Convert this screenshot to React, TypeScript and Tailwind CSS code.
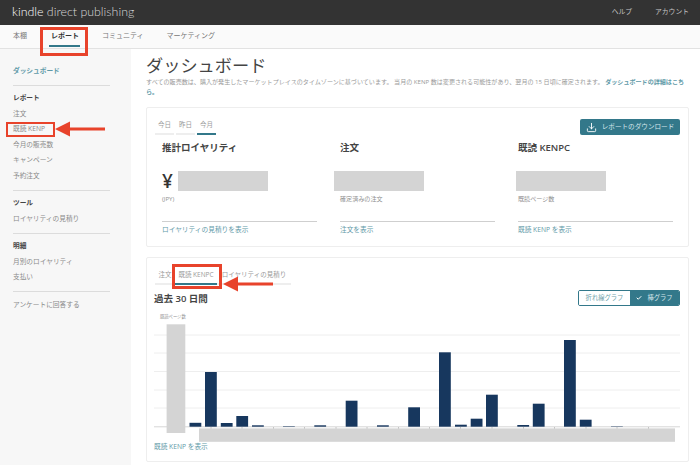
import { Download, Check } from 'lucide-react';

const gridLines = [335, 353, 371.5, 390, 408];
const ticks = [211, 242, 273.5, 304.5, 336, 367, 398.5, 429.5, 460.5, 492, 523.5, 554.5, 586, 617, 648.5];
const bars = [
    [189.5, 422.8], [205, 372], [220.8, 423], [236.3, 416], [252, 425.3], [283, 426.2],
    [314.3, 425.3], [345.7, 400.7], [377, 425.3], [408.2, 407.3], [439, 352.3], [455, 424.7],
    [470.7, 418.7], [486, 394.7], [517.3, 425], [532.8, 403.7], [564, 340], [579.8, 419.7], [611, 426.3],
];

function Divider() {
    return <div className="mt-[6px] mb-[5px] h-px w-[97px] bg-[#dcdcdc]" />;
}

function SideItem({ label, bold }: { label: string; bold?: boolean }) {
    return (
        <div className={`flex h-[15.5px] items-center text-[6.7px] ${bold ? 'font-bold text-[#444]' : 'text-[#8a8a8a]'}`}>
            {label}
        </div>
    );
}

function Tab({ label, active, width }: { label: string; active?: boolean; width: string }) {
    return (
        <div className={`flex flex-col items-center ${width}`}>
            <span className="flex h-[11px] items-center text-[6.5px] whitespace-nowrap text-[#9a9a9a]">{label}</span>
            <div className={`mt-[3px] h-[2px] w-full ${active ? 'bg-[#33788a]' : 'bg-[#eeeeee]'}`} />
        </div>
    );
}

function Stat({ title, note, link, yen, shift }: { title: string; note: string; link: string; yen?: boolean; shift: string }) {
    return (
        <div>
            <h3 className="text-[9.5px] leading-[14px] font-semibold text-[#444]">{title}</h3>
            <div className={`mt-[16px] flex h-[20px] items-center ${shift}`}>
                {yen && <span className="w-[16px] text-[19px] leading-none font-semibold text-[#333]">¥</span>}
                <div className="h-[20px] w-[90px] bg-[#d4d4d4]" />
            </div>
            <p className="mt-[4px] h-[8px] text-[6.1px] leading-[8px] text-[#8f8f8f]">{note}</p>
            <div className="mt-[18px] h-px bg-[#cfcfcf]" />
            <a className="mt-[3px] block text-[6.7px] leading-[9px] text-[#5f9aa8]">{link}</a>
        </div>
    );
}

function Chart() {
    return (
        <svg width="530" height="118" viewBox="154 324 530 118" className="mt-[4.5px] -ml-px block">
            {gridLines.map((y) => (
                <line key={y} x1="154" x2="680" y1={y} y2={y} stroke="#eeeeee" strokeWidth="1" />
            ))}
            <line x1="154" x2="680" y1="426.8" y2="426.8" stroke="#d6d6d6" strokeWidth="1" />
            {ticks.map((x) => (
                <line key={x} x1={x} x2={x} y1="427" y2="429" stroke="#c4c4c4" strokeWidth="1" />
            ))}
            {bars.map(([x, y]) => (
                <rect key={x} x={x} y={y} width="11.8" height={426.7 - y} fill="#17375e" />
            ))}
            <rect x="166.6" y="324.3" width="18.7" height="108.7" fill="#d4d4d4" />
            <rect x="199" y="428.4" width="476" height="13.4" fill="#d4d4d4" />
        </svg>
    );
}

export default function App() {
    return (
        <div className="relative h-[465px] w-[700px] overflow-hidden bg-white font-['Open_Sans','Noto_Sans_CJK_JP',sans-serif]">
            {/* top bar */}
            <header className="flex h-[25px] items-center justify-between bg-[#333333] pr-[11px] pl-[12px] text-[#d8d8d8]">
                <div className="font-['Lato'] text-[12.4px] leading-none font-light whitespace-nowrap">
                    <span className="text-white">kindle</span> direct publishing
                </div>
                <div className="flex gap-[23px] text-[6.8px] text-[#c4c4c4]">
                    <span>ヘルプ</span>
                    <span>アカウント</span>
                </div>
            </header>

            {/* main nav */}
            <nav className="flex h-[24px] items-center border-b border-[#e2e2e2] bg-[#fafafa] text-[7px] text-[#777]">
                <span className="ml-[13px]">本棚</span>
                <div className="relative ml-[24px] flex h-full items-center">
                    <span className="font-bold text-[#333]">レポート</span>
                    <div className="absolute right-[-1px] bottom-[1px] left-[-2px] h-[2px] bg-[#33788a]" />
                </div>
                <span className="ml-[23px]">コミュニティ</span>
                <span className="ml-[23px]">マーケティング</span>
            </nav>

            <div className="flex">
                {/* sidebar */}
                <aside className="h-[416px] w-[131px] shrink-0 bg-[#f7f7f7] pt-[14px] pl-[13px]">
                    <div className="flex h-[15.5px] items-center text-[6.7px] font-bold text-[#5f9aa8]">ダッシュボード</div>
                    <Divider />
                    <SideItem label="レポート" bold />
                    <SideItem label="注文" />
                    <SideItem label="既読 KENP" />
                    <SideItem label="今月の販売数" />
                    <SideItem label="キャンペーン" />
                    <SideItem label="予約注文" />
                    <Divider />
                    <SideItem label="ツール" bold />
                    <SideItem label="ロイヤリティの見積り" />
                    <Divider />
                    <SideItem label="明細" bold />
                    <SideItem label="月別のロイヤリティ" />
                    <SideItem label="支払い" />
                    <Divider />
                    <SideItem label="アンケートに回答する" />
                </aside>

                {/* content */}
                <main className="w-[558px] pt-[6px] pl-[15px]">
                    <h1 className="text-[17.2px] leading-[22px] text-[#444]">ダッシュボード</h1>
                    <p className="h-[21px] w-[540px] text-[6.07px] leading-[10px] text-[#9a9a9a]">
                        すべての販売数は、購入が発生したマーケットプレイスのタイムゾーンに基づいています。 当月の KENP 数は変更される可能性があり、翌月の 15 日頃に確定されます。{' '}
                        <span className="font-bold text-[#5f9aa8]">ダッシュボードの詳細はこちら。</span>
                    </p>

                    {/* summary card */}
                    <section className="mt-[9px] h-[140px] rounded-[2px] border border-[#eeeeee] px-[8px] pt-[11px]">
                        <div className="flex items-start justify-between">
                            <div className="flex gap-[2px]">
                                <Tab label="今日" width="w-[19px]" />
                                <Tab label="昨日" width="w-[19px]" />
                                <Tab label="今月" width="w-[19px]" active />
                            </div>
                            <button className="flex h-[16px] w-[100px] items-center justify-center gap-[5px] rounded-[2px] bg-[#33788a] text-[6.6px] text-[#d5e6ea]">
                                <Download size={11} strokeWidth={2} className="text-white" />
                                レポートのダウンロード
                            </button>
                        </div>
                        <div className="mt-[6px] grid grid-cols-[155px_155px_155px] gap-[23px] pl-[7px]">
                            <Stat title="推計ロイヤリティ" note="(JPY)" link="ロイヤリティの見積りを表示" yen shift="ml-0" />
                            <Stat title="注文" note="確定済みの注文" link="注文を表示" shift="-ml-[6px]" />
                            <Stat title="既読 KENPC" note="既読ページ数" link="既読 KENP を表示" shift="-ml-[2px]" />
                        </div>
                    </section>

                    {/* chart card */}
                    <section className="mt-[10px] h-[205px] rounded-[2px] border border-[#eeeeee] px-[8px] pt-[11px]">
                        <div className="flex w-[136px]">
                            <Tab label="注文" width="w-[20px]" />
                            <Tab label="既読 KENPC" width="w-[42px]" active />
                            <Tab label="ロイヤリティの見積り" width="w-[74px]" />
                        </div>
                        <div className="mt-[5px] flex h-[18px] items-start justify-between">
                            <h3 className="-ml-px text-[9.5px] leading-[17px] font-semibold text-[#444]">過去 30 日間</h3>
                            <div className="flex h-[16px] w-[102px] overflow-hidden rounded-[2px] border border-[#33788a] text-[6.3px]">
                                <span className="flex w-[51px] items-center justify-center bg-white text-[#6f9faa]">折れ線グラフ</span>
                                <span className="flex flex-1 items-center justify-center gap-[5px] bg-[#33788a] text-[#d5e6ea]">
                                    <Check size={6} strokeWidth={4} className="text-white" />
                                    棒グラフ
                                </span>
                            </div>
                        </div>
                        <p className="mt-[4.5px] ml-[5px] h-[7px] text-[4.3px] leading-[7px] text-[#8f8f8f]">既読ページ数</p>
                        <Chart />
                        <a className="-ml-px block text-[6.7px] leading-[9px] text-[#5f9aa8]">既読 KENP を表示</a>
                    </section>
                </main>
            </div>

            {/* red annotations over the screenshot */}
            <div className="absolute top-[27px] left-[40px] h-[29px] w-[48px] border-[3px] border-[#e8432b]" />
            <div className="absolute top-[122px] left-[6px] h-[15px] w-[49px] border-2 border-[#e8432b]" />
            <div className="absolute top-[264px] left-[172px] h-[25px] w-[50px] border-[3px] border-[#e8432b]" />
            <svg className="absolute top-[120px] left-[54px]" width="52" height="18" viewBox="0 0 52 18">
                <path d="M1 9 L16 1.5 V7.5 H51 V10.5 H16 V16.5 Z" fill="#e8432b" />
            </svg>
            <svg className="absolute top-[275px] left-[222px]" width="52" height="18" viewBox="0 0 52 18">
                <path d="M1 9 L16 1.5 V7.5 H51 V10.5 H16 V16.5 Z" fill="#e8432b" />
            </svg>
        </div>
    );
}
